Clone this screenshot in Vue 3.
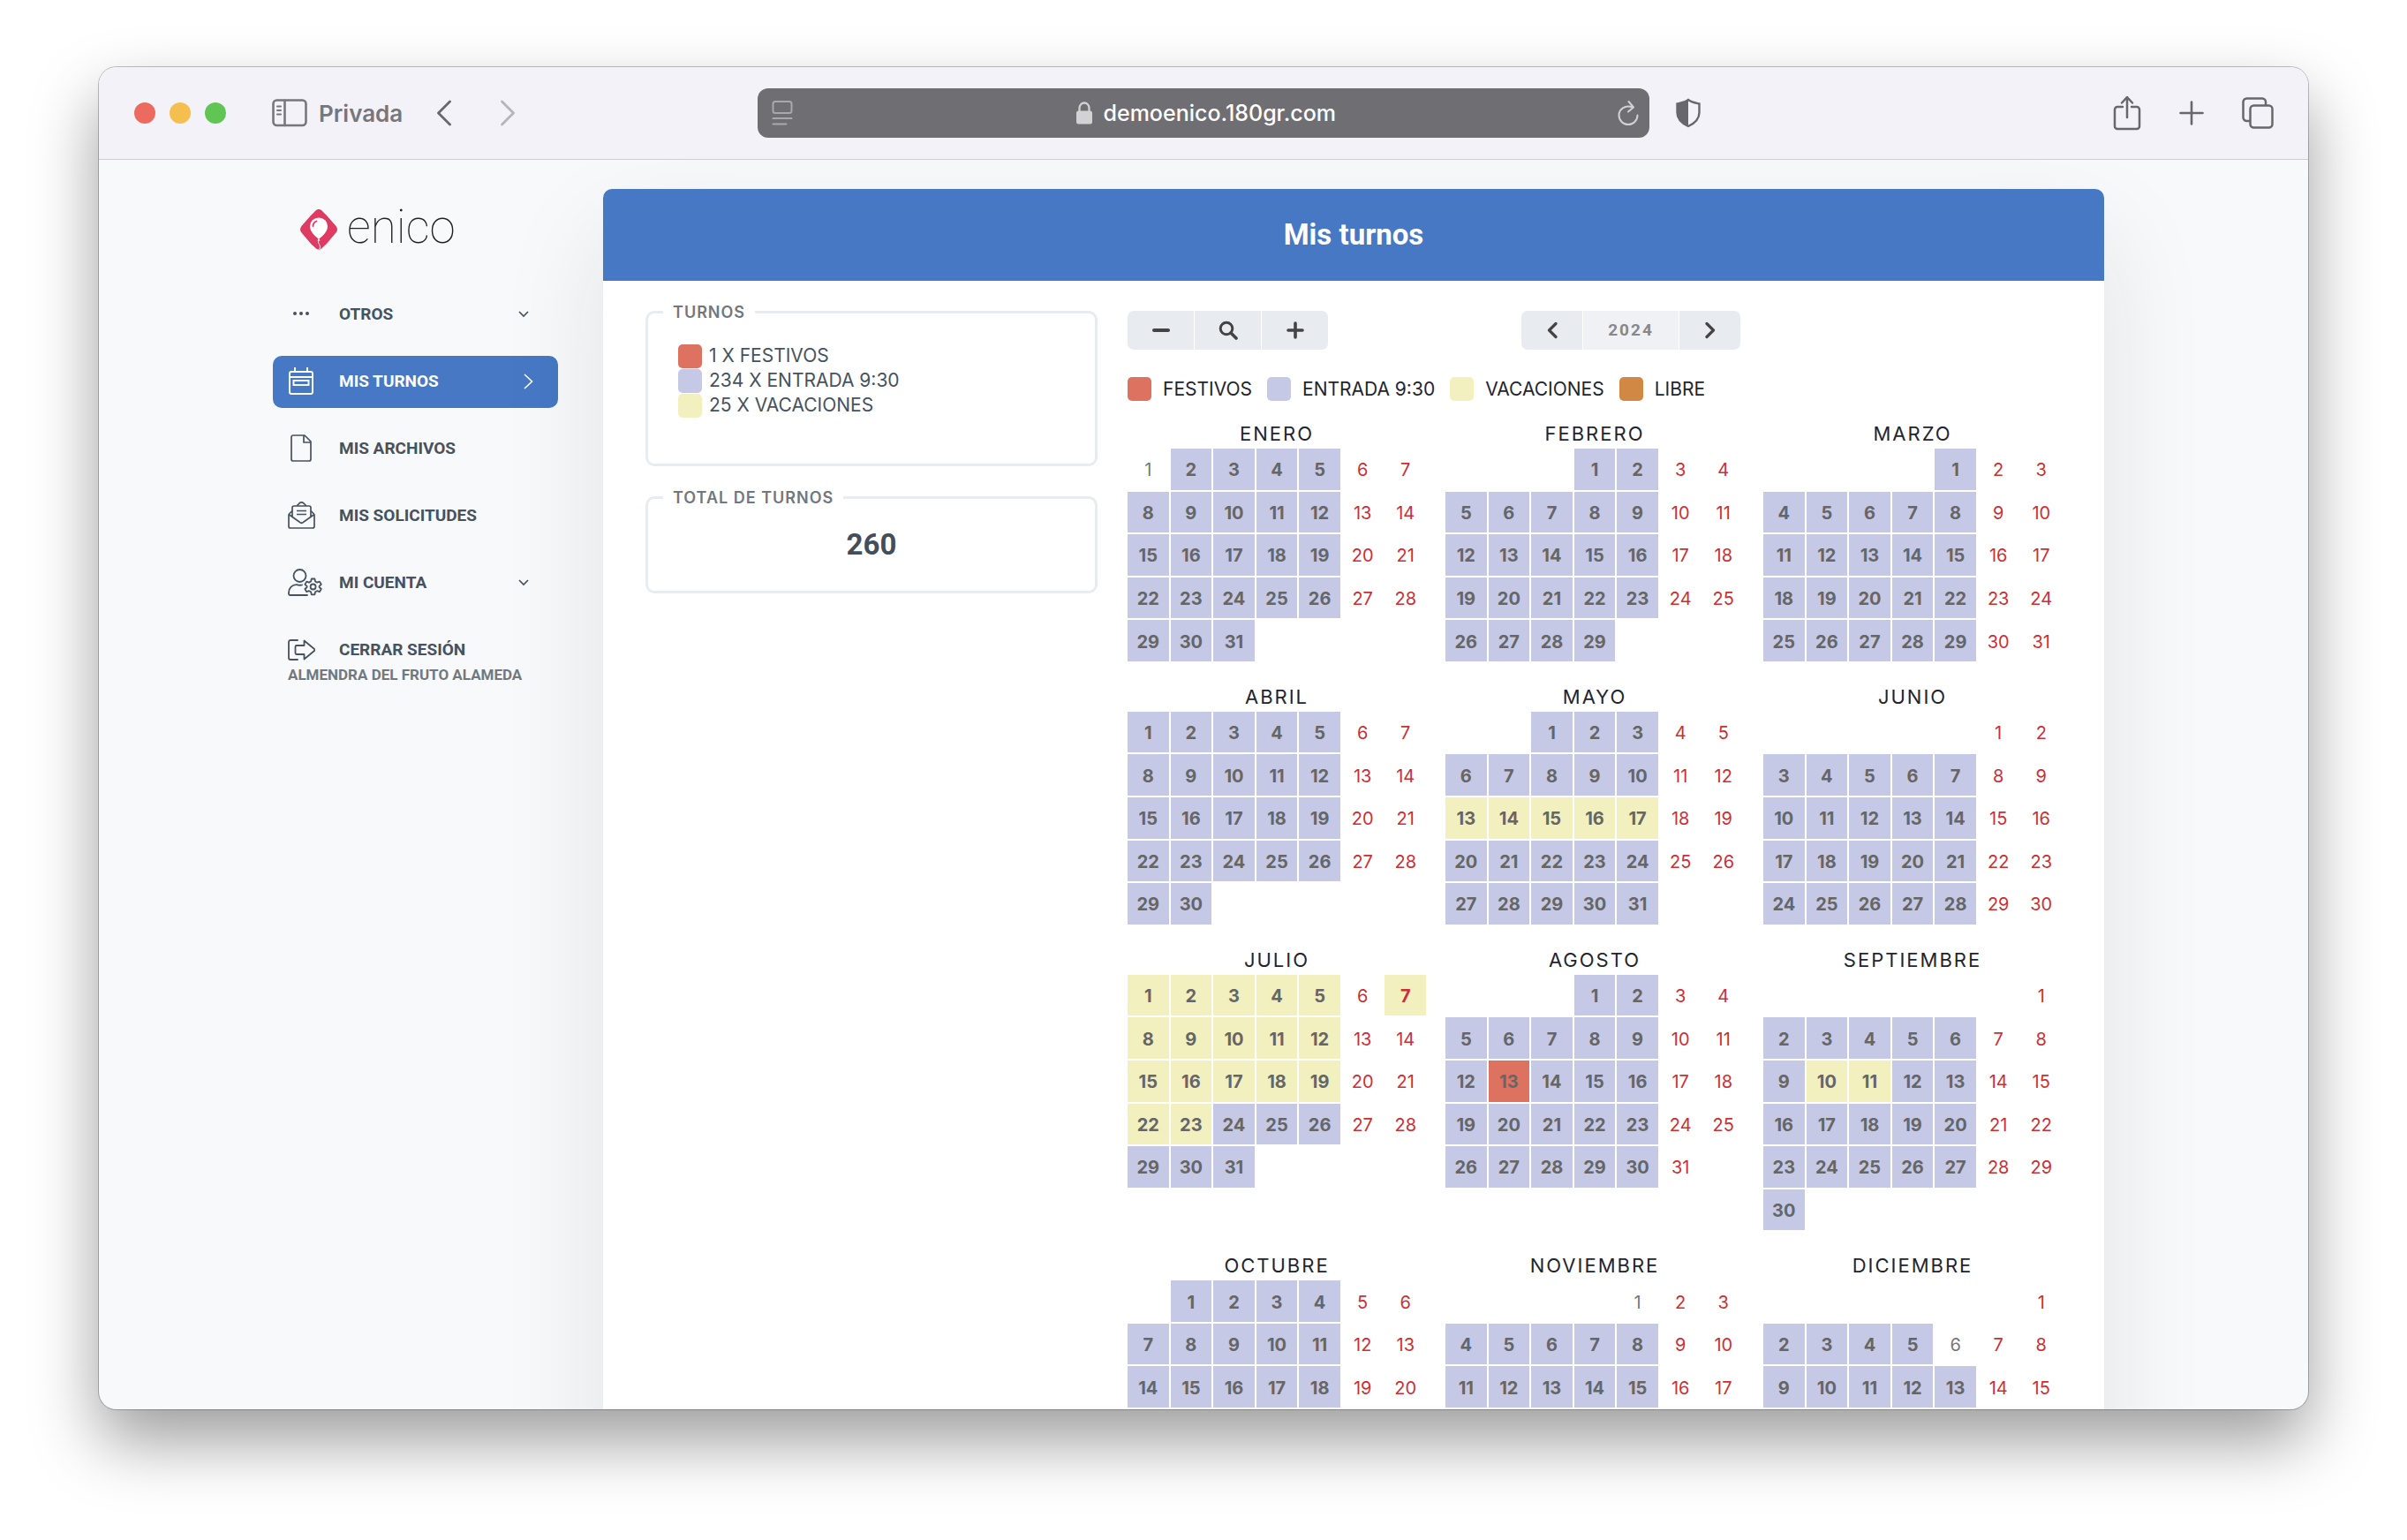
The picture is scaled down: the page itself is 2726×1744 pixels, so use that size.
<script setup>
const year = 2024
const names = ['Enero', 'Febrero', 'Marzo', 'Abril', 'Mayo', 'Junio', 'Julio', 'Agosto', 'Septiembre', 'Octubre', 'Noviembre', 'Diciembre']

const shifts = [
  { key: 'holiday', label: 'Festivos', count: 1 },
  { key: 'entry', label: 'Entrada 9:30', count: 234 },
  { key: 'vacation', label: 'Vacaciones', count: 25 },
]
const legend = [...shifts, { key: 'free', label: 'Libre' }]
const total = shifts.reduce((sum, s) => sum + s.count, 0)

// Days that differ from the regular weekday shift, keyed by month number
const vacations = {
  5: [13, 14, 15, 16, 17],
  7: [1, 2, 3, 4, 5, 7, 8, 9, 10, 11, 12, 15, 16, 17, 18, 19, 22, 23],
  9: [10, 11],
}
const holidays = { 8: [13] }
const unassigned = { 1: [1], 11: [1], 12: [6] }

function shiftFor(month, day, weekend) {
  if (vacations[month]?.includes(day)) return 'vacation'
  if (holidays[month]?.includes(day)) return 'holiday'
  if (weekend || unassigned[month]?.includes(day)) return ''
  return 'entry'
}

const months = names.map((name, index) => {
  const offset = (new Date(year, index, 1).getDay() + 6) % 7
  const length = new Date(year, index + 1, 0).getDate()
  const cells = Array.from({ length: offset }, () => null)
  for (let day = 1; day <= length; day++) {
    const weekend = cells.length % 7 > 4
    cells.push({ day, weekend, shift: shiftFor(index + 1, day, weekend) })
  }
  const weeks = []
  for (let i = 0; i < cells.length; i += 7) weeks.push(cells.slice(i, i + 7))
  return { name, weeks }
})
</script>

<template>
  <div class="desktop">
    <div class="window">
      <header class="toolbar">
        <div class="lights"><i class="light red"></i><i class="light amber"></i><i class="light green"></i></div>
        <button class="tool private" type="button">
          <svg width="40" height="32" viewBox="0 0 40 32" fill="none" stroke="currentColor" stroke-width="2.6" stroke-linecap="round"><rect x="1.5" y="1.5" width="37" height="28.500" rx="4" /><path d="M14.500 2v28" /><path d="M6 8.500h4M6 13h4M6 17.500h4" stroke-width="2" /></svg>
          <span>Privada</span>
        </button>
        <button class="tool back" type="button" aria-label="Atrás">
          <svg width="18" height="30" viewBox="0 0 18 30" fill="none" stroke="currentColor" stroke-width="2.800" stroke-linecap="round" stroke-linejoin="round"><path d="M15.500 2 2.500 15l13 13" /></svg>
        </button>
        <button class="tool forward" type="button" aria-label="Adelante">
          <svg width="18" height="30" viewBox="0 0 18 30" fill="none" stroke="currentColor" stroke-width="2.800" stroke-linecap="round" stroke-linejoin="round"><path d="m2.500 2 13 13-13 13" /></svg>
        </button>
        <div class="address">
          <svg class="reader" width="24" height="30" viewBox="0 0 24 30" fill="none" stroke="currentColor" stroke-width="2" stroke-linecap="round"><rect x="1.500" y="2" width="21" height="13" rx="2.500" /><path d="M1.500 21h21M1.500 27.500h15" /></svg>
          <div class="site">
            <svg width="20" height="26" viewBox="0 0 20 26"><path d="M4.500 12V7.500a5.500 6 0 0 1 11 0V12" fill="none" stroke="currentColor" stroke-width="2.300" /><rect x="1" y="10.500" width="18" height="15" rx="2.500" fill="currentColor" /></svg>
            <span>demoenico.180gr.com</span>
          </div>
          <button class="reload" type="button" aria-label="Recargar">
            <svg width="24" height="30" viewBox="0 0 24 30" fill="none" stroke="currentColor" stroke-width="2" stroke-linecap="round" stroke-linejoin="round"><path d="M17 8.500C8 5.500 1.500 11 1.500 17.500a10.500 10.500 0 0 0 21 0M12.500 2l5.500 6.500-6 5" /></svg>
          </button>
        </div>
        <button class="tool shield" type="button" aria-label="Privacidad">
          <svg width="30" height="34" viewBox="0 0 30 34"><path d="M15 2c4 3 8 3.500 12.500 4.500v10c0 8-6 12.500-12.500 15.500C8.500 29 2.500 24.500 2.500 16.500v-10C7 5.500 11 5 15 2Z" fill="none" stroke="currentColor" stroke-width="2.400" /><path d="M15 2v30C8.500 29 2.500 24.500 2.500 16.500v-10C7 5.500 11 5 15 2Z" fill="currentColor" /></svg>
        </button>
        <div class="actions">
          <button class="tool" type="button" aria-label="Compartir">
            <svg width="32" height="40" viewBox="0 0 32 40" fill="none" stroke="currentColor" stroke-width="2.500" stroke-linecap="round" stroke-linejoin="round"><path d="M11 13H5a3 3 0 0 0-3 3v19a3 3 0 0 0 3 3h22a3 3 0 0 0 3-3V16a3 3 0 0 0-3-3h-6M16 25V2.500M10 8.500l6-6.500 6 6.500" /></svg>
          </button>
          <button class="tool" type="button" aria-label="Pestaña nueva">
            <svg width="28" height="28" viewBox="0 0 28 28" fill="none" stroke="currentColor" stroke-width="2.600" stroke-linecap="round"><path d="M14 1.500v25M1.500 14h25" /></svg>
          </button>
          <button class="tool" type="button" aria-label="Pestañas">
            <svg width="36" height="36" viewBox="0 0 36 36" fill="none" stroke="currentColor" stroke-width="2.500" stroke-linejoin="round"><rect x="9.500" y="9.500" width="25" height="25" rx="4" /><path d="M9 27H5.500a4 4 0 0 1-4-4V5.500a4 4 0 0 1 4-4H23a4 4 0 0 1 4 4V9" /></svg>
          </button>
        </div>
      </header>

      <div class="viewport">
        <div class="page">
          <aside class="sidebar">
            <a class="brand" href="#">
              <svg width="44" height="48" viewBox="0 0 44 48">
                <path d="M18.500 2.500c2-2 5-2 7 0l5 5 11 12.500c2 2.500 2 5 0 7.500l-11 13-5 4.500c-2 2-5 2-7 0l-5-4.500-11-13c-2-2.500-2-5 0-7.500l11-12.500Z" fill="#de3a62" />
                <path d="M22 34.500c-4-2.500-10-8-10-14.500a10 9.500 0 0 1 20 0c0 6.500-6 12-10 14.500Z" fill="#fff" />
                <path d="M20.500 36.500l1.500-3 1.500 3Z" fill="#fff" />
                <path d="M22 36c-2 4 3 5 1 10" fill="none" stroke="#fff" stroke-width="1" />
                <path d="M15.500 20c0-3 1.500-4.500 4-5.500" fill="none" stroke="#de3a62" stroke-width="1.800" stroke-linecap="round" />
              </svg>
              <span>enico</span>
            </a>
            <nav class="menu">
              <a class="item" href="#">
                <svg class="icon" width="31" height="31" viewBox="0 0 31 31" fill="currentColor"><circle cx="8" cy="15" r="2" /><circle cx="15" cy="15" r="2" /><circle cx="22" cy="15" r="2" /></svg>
                <span class="label">Otros</span>
                <svg class="caret" width="12" height="8" viewBox="0 0 12 8" fill="none" stroke="currentColor" stroke-width="1.700"><path d="m1 1 5 5 5-5" /></svg>
              </a>
              <a class="item active" href="#" aria-current="page">
                <svg class="icon" width="31" height="31" viewBox="0 0 31 31" fill="none" stroke="currentColor" stroke-width="1.900"><rect x="2" y="5" width="26" height="25" rx="2" /><path d="M2 11h26M8 0v5M22 0v5" /><rect x="6.500" y="15" width="17" height="5" /></svg>
                <span class="label">Mis turnos</span>
                <svg class="caret wide" width="11" height="18" viewBox="0 0 11 18" fill="none" stroke="currentColor" stroke-width="1.600"><path d="m1 1 8.500 8L1 17" /></svg>
              </a>
              <a class="item" href="#">
                <svg class="icon" width="31" height="31" viewBox="0 0 31 31" fill="none" stroke="currentColor" stroke-width="1.700" stroke-linejoin="round"><path d="M6 1h13l7 7v20a2 2 0 0 1-2 2H6a2 2 0 0 1-2-2V3a2 2 0 0 1 2-2Z" /><path d="M18 1v8h8" /></svg>
                <span class="label">Mis archivos</span>
              </a>
              <a class="item" href="#">
                <svg class="icon" width="31" height="31" viewBox="0 0 31 31" fill="none" stroke="currentColor" stroke-width="1.700" stroke-linejoin="round"><path d="M5 10.500 1.500 14c-.4.400-.5 1-.5 1.500V28a2 2 0 0 0 2 2h25a2 2 0 0 0 2-2V15.500c0-.5-.1-1.100-.5-1.500L26 10.500" /><path d="M5 17V7a2 2 0 0 1 2-2h17a2 2 0 0 1 2 2v10M1 14.500l12 8.500c1.500 1.500 3.500 1.500 5 0l12-8.500M10 5l3-3c1.500-1.300 3.500-1.300 5 0l3 3" /><path d="M10 10.500h11M10 14.500h11" /></svg>
                <span class="label">Mis solicitudes</span>
              </a>
              <a class="item" href="#">
                <svg class="icon" width="39" height="31" viewBox="0 0 39 31" fill="none" stroke="currentColor" stroke-width="1.800" stroke-linejoin="round" stroke-linecap="round"><circle cx="13.500" cy="8" r="7" /><path d="M16 18.500c-2 .6-4 .2-6-.3C5 18 1 22 1 27v1.500c0 1 .5 1.500 1.500 1.500H22" /><path d="m26.800 11.500 3.600 0 .7 3 2 1.100 2.800-1 1.900 3.200-2.200 2 0 1.200 2.200 2-1.900 3.200-2.800-1-2 1.100-.7 3-3.600 0-.7-3-2-1.100-2.800 1-1.900-3.200 2.200-2 0-1.200-2.200-2 1.900-3.200 2.800 1 2-1.100Z" /><circle cx="28.600" cy="20.500" r="3" /></svg>
                <span class="label">Mi cuenta</span>
                <svg class="caret" width="12" height="8" viewBox="0 0 12 8" fill="none" stroke="currentColor" stroke-width="1.700"><path d="m1 1 5 5 5-5" /></svg>
              </a>
              <a class="item" href="#">
                <svg class="icon" width="31" height="24" viewBox="0 0 31 24" fill="none" stroke="currentColor" stroke-width="1.800" stroke-linejoin="round" stroke-linecap="round"><path d="M11 1H3a2 2 0 0 0-2 2v18a2 2 0 0 0 2 2h8" /><path d="M18.500 1.500V7H10a1.500 1.500 0 0 0-1.500 1.500v7A1.500 1.500 0 0 0 10 17h8.500v5.500L30 13c.5-.6.500-1.400 0-2Z" /></svg>
                <span class="label">Cerrar sesión</span>
              </a>
            </nav>
            <p class="user">Almendra del fruto Alameda</p>
          </aside>

          <main class="card">
            <h1 class="title">Mis turnos</h1>
            <div class="body">
              <section class="summary">
                <fieldset class="box">
                  <legend>Turnos</legend>
                  <ul class="counts">
                    <li v-for="s in shifts" :key="s.key"><i class="swatch" :class="s.key"></i>{{ s.count }} x {{ s.label }}</li>
                  </ul>
                </fieldset>
                <fieldset class="box">
                  <legend>Total de turnos</legend>
                  <p class="total">{{ total }}</p>
                </fieldset>
              </section>

              <section class="planner">
                <div class="controls">
                  <div class="group">
                    <button type="button" aria-label="Reducir"><svg width="22" height="22" viewBox="0 0 22 22"><path d="M3 11h16" stroke="currentColor" stroke-width="4" stroke-linecap="round" /></svg></button>
                    <button type="button" aria-label="Buscar"><svg width="22" height="22" viewBox="0 0 22 22" fill="none" stroke="currentColor"><circle cx="9" cy="9" r="6.800" stroke-width="3" /><path d="m14 14 6 6" stroke-width="3.600" stroke-linecap="round" /></svg></button>
                    <button type="button" aria-label="Ampliar"><svg width="22" height="22" viewBox="0 0 22 22"><path d="M3 11h16M11 3v16" stroke="currentColor" stroke-width="3.600" stroke-linecap="round" /></svg></button>
                  </div>
                  <div class="group years">
                    <button type="button" aria-label="Año anterior"><svg width="12" height="20" viewBox="0 0 12 20" fill="none" stroke="currentColor" stroke-width="3.200" stroke-linecap="round" stroke-linejoin="round"><path d="m10 2.500-7.500 7.500 7.500 7.500" /></svg></button>
                    <span class="year">{{ year }}</span>
                    <button type="button" aria-label="Año siguiente"><svg width="12" height="20" viewBox="0 0 12 20" fill="none" stroke="currentColor" stroke-width="3.200" stroke-linecap="round" stroke-linejoin="round"><path d="m2 2.500 7.500 7.500-7.500 7.500" /></svg></button>
                  </div>
                </div>
                <ul class="key">
                  <li v-for="s in legend" :key="s.key"><i class="swatch" :class="s.key"></i>{{ s.label }}</li>
                </ul>
                <div class="months">
                  <table v-for="m in months" :key="m.name" class="month">
                    <caption>{{ m.name }}</caption>
                    <tbody>
                      <tr v-for="(week, w) in m.weeks" :key="w">
                        <td v-for="(c, d) in week" :key="d" :class="c && [c.shift, { weekend: c.weekend, marked: c.shift }]">{{ c ? c.day : '' }}</td>
                      </tr>
                    </tbody>
                  </table>
                </div>
              </section>
            </div>
          </main>
        </div>
      </div>
    </div>
  </div>
</template>

<style>
body {
  margin: 0;
  background: #fff;
}
</style>

<style scoped>
* {
  box-sizing: border-box;
}
button {
  border: 0;
  padding: 0;
  background: none;
  font: inherit;
  color: inherit;
}
a {
  color: inherit;
  text-decoration: none;
}
ul, p, h1 {
  margin: 0;
  padding: 0;
  list-style: none;
}
svg {
  display: block;
  flex: none;
}

.desktop {
  height: 100vh;
  padding: 76px 112px 148px;
  overflow: hidden;
  font-family: Inter, sans-serif;
}
.window {
  display: flex;
  flex-direction: column;
  height: 100%;
  overflow: hidden;
  border-radius: 20px;
  background: #f7f9fb;
  box-shadow: 0 0 0 1px rgba(0, 0, 0, 0.24), 0 36px 76px rgba(0, 0, 0, 0.39);
}

/* Browser toolbar */
.toolbar {
  display: flex;
  flex: none;
  align-items: center;
  height: 105px;
  padding: 0 39px 0 40px;
  border-bottom: 1px solid #cfced4;
  background: #f3f2f8;
  color: #68676d;
}
.lights {
  display: flex;
  gap: 16px;
}
.light {
  width: 24px;
  height: 24px;
  border-radius: 50%;
}
.red { background: #ec6a5e; }
.amber { background: #f4bf4f; }
.green { background: #61c554; }
.tool {
  display: flex;
  align-items: center;
  height: 40px;
}
.private {
  gap: 13px;
  margin-left: 52px;
  color: #77767b;
  font-size: 26px;
  font-weight: 600;
}
.back {
  margin-left: 38px;
}
.forward {
  margin-left: 54px;
  color: #b5b4ba;
}
.address {
  display: flex;
  flex: none;
  align-items: center;
  justify-content: space-between;
  width: 1010px;
  height: 56px;
  margin-left: 274px;
  padding: 0 12px 0 16px;
  border-radius: 12px;
  background: #6f6e73;
  color: #fff;
  font-size: 25px;
  font-weight: 500;
}
.reader {
  color: #a9a8ad;
}
.site {
  display: flex;
  align-items: center;
  gap: 12px;
}
.site svg, .reload {
  color: #d2d1d4;
}
.shield {
  margin-left: 29px;
}
.actions {
  display: flex;
  align-items: center;
  gap: 43px;
  margin-left: auto;
}

/* Page */
.viewport {
  flex: 1;
  min-height: 0;
  overflow: hidden auto;
  scrollbar-width: none;
}
.page {
  display: flex;
  align-items: flex-start;
  gap: 51px;
  max-width: 2108px;
  margin: 0 auto;
  padding: 33px 34px 0 0;
}
.sidebar {
  flex: none;
  width: 323px;
  color: #46525f;
  font-family: Roboto, sans-serif;
  font-weight: 700;
  text-transform: uppercase;
}
.brand {
  display: flex;
  align-items: center;
  gap: 10px;
  height: 92px;
  padding: 0 0 0 30px;
  color: #222;
  font-size: 53px;
  font-weight: 100;
  line-height: 1;
  text-transform: none;
}
.brand span {
  padding-bottom: 6px;
}
.menu {
  display: flex;
  flex-direction: column;
  gap: 17px;
  padding-top: 21px;
}
.item {
  display: grid;
  grid-template-columns: 58px 1fr auto;
  align-items: center;
  height: 59px;
  padding: 0 33px 2px 17px;
  border-radius: 10px;
  font-size: 19px;
}
.active {
  padding-right: 28px;
  background: #4678c4;
  color: #fff;
}
.user {
  margin-top: -12px;
  padding-left: 17px;
  color: #717880;
  font-size: 17px;
  line-height: 20px;
}

.card {
  flex: 1;
  min-width: 0;
  border-radius: 10px;
  background: #fff;
  box-shadow: 0 50px 120px rgba(30, 30, 30, 0.1);
}
.title {
  height: 104px;
  border-radius: 10px 10px 0 0;
  background: #4678c4;
  color: #fff;
  font: 700 33px/104px Roboto, sans-serif;
  text-align: center;
}
.body {
  display: grid;
  grid-template-columns: repeat(3, 1fr);
  gap: 34px;
  padding: 22px 48px 48px;
}
.summary {
  display: flex;
  flex-direction: column;
  gap: 22px;
}
.box {
  min-width: 0;
  margin: 0;
  padding: 0 17px;
  border: 3px solid #e8ebef;
  border-radius: 10px;
}
.box legend {
  padding: 0 11px;
  color: #717780;
  font-size: 18px;
  font-weight: 600;
  letter-spacing: 1px;
  line-height: 27px;
  text-transform: uppercase;
}
.counts {
  padding: 22px 17px 52px;
  color: #46525f;
  font-size: 21px;
  line-height: 28px;
  text-transform: uppercase;
}
.counts li, .key li {
  display: flex;
  align-items: center;
}
.counts li {
  gap: 8px;
}
.swatch {
  width: 27px;
  height: 27px;
  border-radius: 5px;
}
.total {
  padding: 20px 0 32px;
  color: #424e5a;
  font: 700 33px/40px Roboto, sans-serif;
  text-align: center;
}

.planner {
  grid-column: span 2;
  padding-top: 12px;
}
.controls {
  display: flex;
  justify-content: space-between;
}
.group {
  display: flex;
  gap: 1px;
  overflow: hidden;
  height: 44px;
  border-radius: 7px;
  color: #444;
}
.group button {
  display: flex;
  align-items: center;
  justify-content: center;
  width: 75px;
  background: #e8ebef;
}
.years {
  margin-right: 364px;
}
.group.years button {
  width: 69px;
}
.year {
  width: 108px;
  background: #f0f1f5;
  color: #888;
  font: 700 19px/44px Roboto, sans-serif;
  letter-spacing: 2px;
  text-align: center;
}
.key {
  display: flex;
  gap: 17px;
  padding-top: 31px;
  color: #22252f;
  font-size: 21px;
  line-height: 27px;
  text-transform: uppercase;
}
.key li {
  gap: 13px;
}
.entry { background: #c5c9e6; }
.holiday { background: #dd7260; }
.vacation { background: #f3f0c0; }
.free { background: #d18845; }

.months {
  display: grid;
  grid-template-columns: repeat(3, 1fr);
  gap: 24px 22px;
  padding-top: 21px;
}
.month {
  display: block;
}
.month caption {
  display: block;
  padding-bottom: 1px;
  color: #22252f;
  font-size: 22px;
  letter-spacing: 2px;
  line-height: 32px;
  text-align: center;
  text-transform: uppercase;
}
.month tbody {
  display: grid;
  gap: 2px;
}
.month tr {
  display: grid;
  grid-template-columns: repeat(7, 1fr);
  gap: 2px;
}
.month td {
  display: flex;
  align-items: center;
  justify-content: center;
  aspect-ratio: 1;
  padding: 2px 0 0;
  color: #777;
  font-size: 20px;
  line-height: 24px;
}
.month .marked {
  color: #666;
  font-weight: 700;
}
.month .weekend {
  color: #cb2f36;
}
</style>
